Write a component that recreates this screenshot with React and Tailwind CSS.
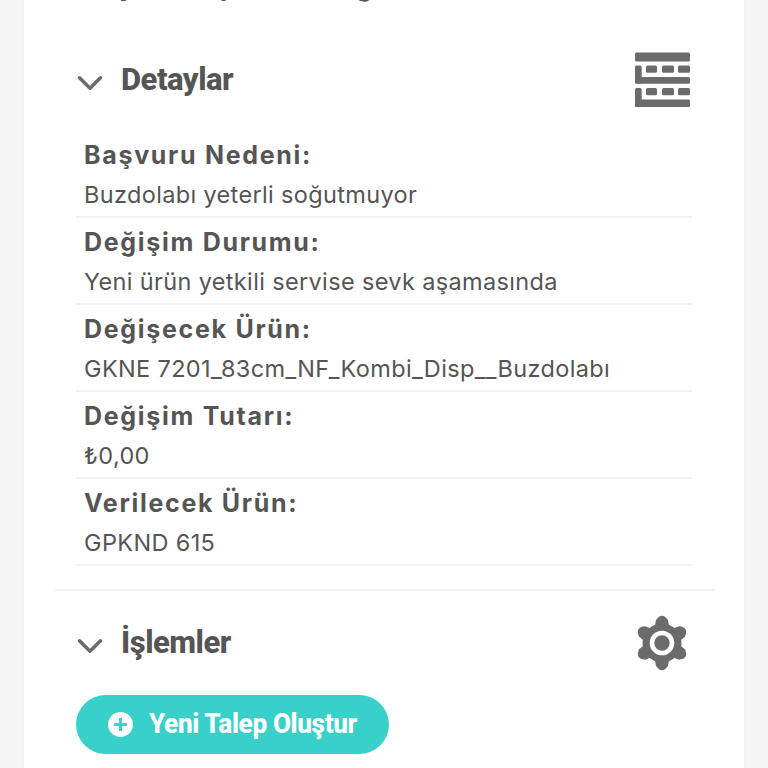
import React from 'react';
import { ChevronDown } from 'lucide-react';

const rows = [
  { label: 'Başvuru Nedeni:', value: 'Buzdolabı yeterli soğutmuyor' },
  { label: 'Değişim Durumu:', value: 'Yeni ürün yetkili servise sevk aşamasında' },
  { label: 'Değişecek Ürün:', value: 'GKNE 7201_83cm_NF_Kombi_Disp__Buzdolabı' },
  { label: 'Değişim Tutarı:', value: '₺0,00' },
  { label: 'Verilecek Ürün:', value: 'GPKND 615' },
];

const BrickIcon = () => (
  <svg width="56" height="56" viewBox="-1 0 56 56" fill="#6b6b6b">
    <rect x="0" y="0.5" width="55" height="9" rx="1.5" />
    <rect x="0" y="13.5" width="6.7" height="18" rx="1.5" />
    <rect x="0" y="25" width="55" height="6.7" rx="1.5" />
    <rect x="11" y="13.5" width="11" height="7.3" rx="1.5" />
    <rect x="27" y="13.5" width="12" height="7.3" rx="1.5" />
    <rect x="43" y="13.5" width="12" height="7.3" rx="1.5" />
    <rect x="0" y="36" width="6.7" height="19" rx="1.5" />
    <rect x="0" y="47.6" width="55" height="7.4" rx="1.5" />
    <rect x="11" y="36" width="11" height="7.3" rx="1.5" />
    <rect x="27" y="36" width="12" height="7.3" rx="1.5" />
    <rect x="43" y="36" width="12" height="7.3" rx="1.5" />
  </svg>
);

const GearIcon = () => (
  <svg width="56" height="56" viewBox="0 0 56 56" fill="#6b6b6b">
    <circle cx="28" cy="28" r="19.5" />
    {[0, 60, 120, 180, 240, 300].map((angle) => (
      <path key={angle} d="M20.5 14 L22 5 Q28 -3.5 34 5 L35.5 14 Z" transform={`rotate(${angle} 28 28)`} />
    ))}
    <circle cx="28" cy="28" r="12.3" fill="#fff" />
    <circle cx="28" cy="28" r="7.7" />
  </svg>
);

const PlusIcon = () => (
  <svg width="25" height="25" viewBox="0 0 25 25">
    <circle cx="12.5" cy="12.5" r="12.5" fill="#fff" />
    <path d="M12.5 6v13M6 12.5h13" stroke="#39d0ca" strokeWidth="3" />
  </svg>
);

const SectionHeader = ({ title, icon }) => (
  <div className="flex items-center justify-between">
    <div className="flex items-center">
      <ChevronDown className="w-[42px] h-[42px] text-[#6b6b6b] ml-[-7px] mt-[5px]" strokeWidth={2} />
      <h2 className="ml-[10px] text-[31px] leading-[40px] font-extrabold tracking-[-0.5px] text-[#555] font-['Roboto',sans-serif]">
        {title}
      </h2>
    </div>
    {icon}
  </div>
);

export default function App() {
  return (
    <div className="h-[768px] w-[768px] overflow-hidden bg-[#f5f5f5] font-['Inter',sans-serif]">
      <div className="mx-[24px] h-full w-[720px] bg-white shadow-[0_0_3px_rgba(0,0,0,0.04)] overflow-hidden">
        <p className="mt-[-28px] h-[30px] pl-[60px] text-[25px] leading-[30px] font-bold tracking-[1.7px] text-[#555] whitespace-nowrap">
          Kaydı Oluşturan Bölge
        </p>
        <div className="px-[52px]">
          <div className="mt-[50px]">
            <SectionHeader title="Detaylar" icon={<div className="mr-[2px] flex"><BrickIcon /></div>} />
          </div>
          <div className="mt-[23px]">
            {rows.map((row) => (
              <div key={row.label} className="h-[87px] border-b-2 border-[#f2f2f2] px-[8px] pt-[5px]">
                <div className="text-[25px] leading-[39px] font-bold tracking-[1.7px] text-[#555]">
                  {row.label}
                </div>
                <div className="text-[23.5px] leading-[39px] tracking-[0.35px] text-[#555] font-normal">{row.value}</div>
              </div>
            ))}
          </div>
        </div>
        <div className="ml-[31px] mr-[29px] mt-[23px] border-t-2 border-[#f2f2f2] pl-[21px] pr-[23px] pt-[24px]">
          <SectionHeader title="İşlemler" icon={<div className="mr-[2px] flex"><GearIcon /></div>} />
          <button className="mt-[24px] flex h-[59px] w-[313px] items-center rounded-full bg-[#39d0ca] pl-[32px] text-white">
            <PlusIcon />
            <span className="ml-[16px] text-[27px] font-extrabold tracking-[-0.4px] font-['Roboto',sans-serif] scale-x-[0.97] origin-left whitespace-nowrap">
              Yeni Talep Oluştur
            </span>
          </button>
        </div>
      </div>
    </div>
  );
}
